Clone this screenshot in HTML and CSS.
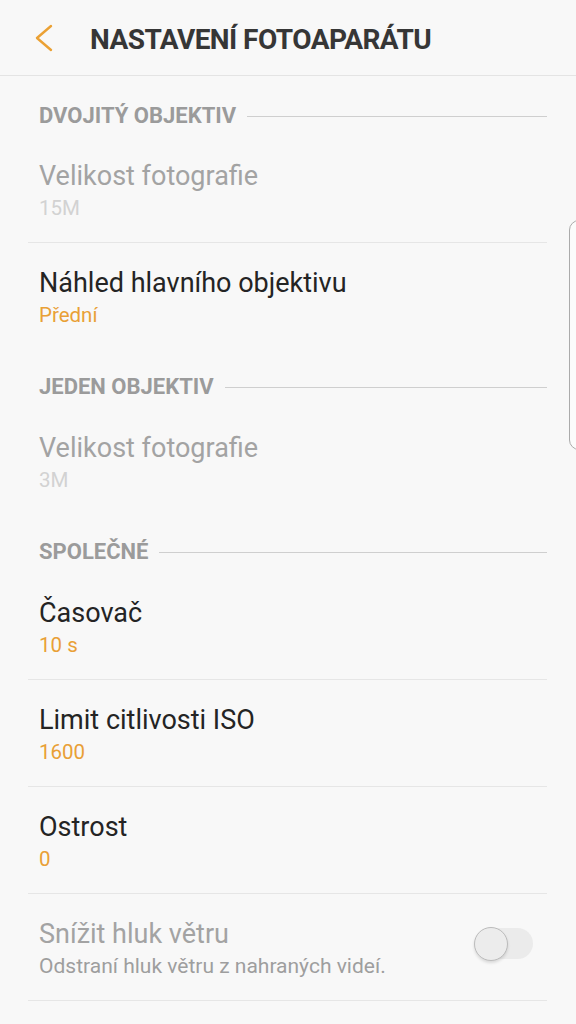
FILE: index.html
```html
<!DOCTYPE html>
<html lang="cs">
<head>
<meta charset="utf-8">
<title>Nastavení fotoaparátu</title>
<link rel="stylesheet" href="styles.css">
</head>
<body>
<div class="screen">
  <header class="appbar">
    <svg class="back" width="30" height="76" viewBox="0 0 30 76" aria-hidden="true">
      <polyline points="21,26 7,38 21,50" fill="none" stroke="#eba134" stroke-width="2.4" stroke-linecap="round" stroke-linejoin="round"/>
    </svg>
    <h1 class="title">NASTAVENÍ FOTOAPARÁTU</h1>
  </header>

  <div class="list">
    <div class="section first"><span>DVOJITÝ OBJEKTIV</span><i class="rule"></i></div>
    <div class="item disabled divided">
      <div class="item-title">Velikost fotografie</div>
      <div class="item-sub">15M</div>
    </div>
    <div class="item">
      <div class="item-title">Náhled hlavního objektivu</div>
      <div class="item-sub accent">Přední</div>
    </div>

    <div class="section"><span>JEDEN OBJEKTIV</span><i class="rule"></i></div>
    <div class="item disabled">
      <div class="item-title">Velikost fotografie</div>
      <div class="item-sub">3M</div>
    </div>

    <div class="section"><span>SPOLEČNÉ</span><i class="rule"></i></div>
    <div class="item divided">
      <div class="item-title">Časovač</div>
      <div class="item-sub accent">10 s</div>
    </div>
    <div class="item divided">
      <div class="item-title">Limit citlivosti ISO</div>
      <div class="item-sub accent">1600</div>
    </div>
    <div class="item divided">
      <div class="item-title">Ostrost</div>
      <div class="item-sub accent">0</div>
    </div>
    <div class="item divided disabled-switch">
      <div class="item-text">
        <div class="item-title">Snížit hluk větru</div>
        <div class="item-sub">Odstraní hluk větru z nahraných videí.</div>
      </div>
      <div class="switch"><span class="track"></span><span class="thumb"></span></div>
    </div>
  </div>

  <div class="edge-handle"></div>
</div>
</body>
</html>
```

FILE: styles.css
```css
html, body {
  margin: 0;
  padding: 0;
  background: #f8f8f8;
}

body {
  font-family: Roboto, "Noto Sans", "Liberation Sans", sans-serif;
  width: 576px;
  height: 1024px;
  overflow: hidden;
}

.screen {
  position: relative;
  width: 576px;
  height: 1024px;
  overflow: hidden;
}

.appbar {
  display: flex;
  align-items: center;
  height: 76px;
  box-sizing: border-box;
  border-bottom: 1px solid #e4e4e4;
  padding-left: 30px;
}

.back {
  display: block;
  flex: none;
  align-self: flex-start;
}

.title {
  margin: 0 0 0 30px;
  padding-top: 4px;
  font-size: 28px;
  line-height: 32px;
  font-weight: 700;
  color: #363636;
  letter-spacing: -0.55px;
}

.list {
  display: flex;
  flex-direction: column;
}

.section {
  display: flex;
  align-items: center;
  margin: 0 29px 0 39px;
  padding: 25px 0 9px;
  height: 24px;
}

.section.first {
  padding-top: 28px;
  padding-bottom: 8px;
}

.section span {
  font-size: 22px;
  line-height: 24px;
  font-weight: 700;
  color: #9b9b9b;
  white-space: nowrap;
}

.rule {
  flex: 1;
  height: 1px;
  background: #cfcfcf;
  margin-left: 11px;
}

.item {
  margin: 0 29px 0 28px;
  padding: 25px 0 0 11px;
  height: 107px;
  box-sizing: border-box;
}

.item.divided {
  border-bottom: 1px solid #e6e6e6;
}

.item-title {
  font-size: 27px;
  line-height: 30px;
  color: #242424;
}

.item-sub {
  margin-top: 5px;
  font-size: 20.5px;
  line-height: 24px;
  color: #8d8d8d;
}

.item-sub.accent {
  color: #e9a036;
}

.item.disabled .item-title {
  color: #a3a3a3;
}

.item.disabled .item-sub {
  color: #d2d2d2;
}

.disabled-switch {
  display: flex;
  align-items: flex-start;
  justify-content: space-between;
}

.disabled-switch .item-title {
  color: #a3a3a3;
}

.disabled-switch .item-sub {
  color: #9e9e9e;
  font-size: 21px;
}

.switch {
  position: relative;
  width: 59px;
  height: 36px;
  margin-top: 7px;
  margin-right: 14px;
  flex: none;
}

.track {
  position: absolute;
  left: 8px;
  right: 0;
  top: 2px;
  height: 31px;
  border-radius: 16px;
  background: #ebebeb;
}

.thumb {
  position: absolute;
  left: 0;
  top: 1px;
  width: 32px;
  height: 32px;
  border-radius: 50%;
  background: #ececec;
  border: 1.5px solid #bcbcbc;
  box-shadow: 0 2px 3px rgba(0, 0, 0, 0.12);
}

.edge-handle {
  position: absolute;
  left: 569px;
  top: 220px;
  width: 20px;
  height: 230px;
  box-sizing: border-box;
  border: 1.5px solid #ababab;
  border-radius: 10px;
  background: #fbfbfb;
}
```
